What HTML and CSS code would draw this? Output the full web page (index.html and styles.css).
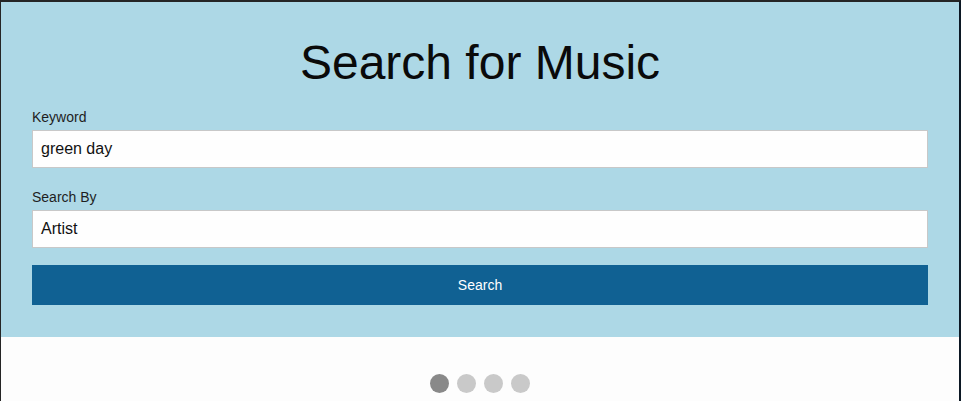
FILE: index.html
```html
<!DOCTYPE html>
<html>
<head>
<meta charset="utf-8">
<link rel="stylesheet" href="styles.css">
</head>
<body>
<div class="frame">
  <section class="panel">
    <h1 class="title">Search for Music</h1>
    <form class="form">
      <label class="label" for="kw">Keyword</label>
      <input class="field" id="kw" type="text" value="green day">
      <label class="label label-2" for="by">Search By</label>
      <div class="field select">Artist</div>
      <button class="btn" type="button">Search</button>
    </form>
  </section>
  <section class="results">
    <div class="dots">
      <span class="dot dot-active"></span>
      <span class="dot"></span>
      <span class="dot"></span>
      <span class="dot"></span>
    </div>
  </section>
</div>
</body>
</html>
```

FILE: styles.css
```css
html, body {
  margin: 0;
  padding: 0;
  background: #fdfdfd;
  font-family: "Liberation Sans", Arial, sans-serif;
  overflow: hidden;
}
.frame {
  height: 401px;
  box-sizing: border-box;
  border-top: 2px solid #252525;
  border-left: 1px solid #252525;
  border-right: 2px solid #0c1824;
  background: #fdfdfd;
}
.panel {
  background: #add8e6;
  padding: 34px 31px 32px;
}
.title {
  margin: 0 0 19px;
  font-size: 48px;
  font-weight: normal;
  line-height: 54px;
  text-align: center;
  color: #0a0a0a;
}
.form {
  display: flex;
  flex-direction: column;
  margin: 0;
}
.label {
  font-size: 14px;
  line-height: 16px;
  color: #1e1e1e;
  margin-bottom: 5px;
}
.label-2 {
  margin-top: 21px;
}
.field {
  box-sizing: border-box;
  height: 38px;
  margin: 0;
  padding: 0 8px;
  border: 1px solid #c8c8c8;
  background: #fefefe;
  font-family: "Liberation Sans", Arial, sans-serif;
  font-size: 16px;
  color: #111;
  outline: none;
  width: 100%;
}
.select {
  display: flex;
  align-items: center;
}
.btn {
  margin-top: 17px;
  height: 40px;
  border: none;
  background: #106193;
  color: #fff;
  font-family: "Liberation Sans", Arial, sans-serif;
  font-size: 14px;
  width: 100%;
  padding: 0;
}
.results {
  padding-top: 37px;
}
.dots {
  display: flex;
  justify-content: center;
  gap: 8px;
}
.dot {
  width: 19px;
  height: 19px;
  border-radius: 50%;
  background: #c9c9c9;
}
.dot-active {
  background: #898989;
}
```
